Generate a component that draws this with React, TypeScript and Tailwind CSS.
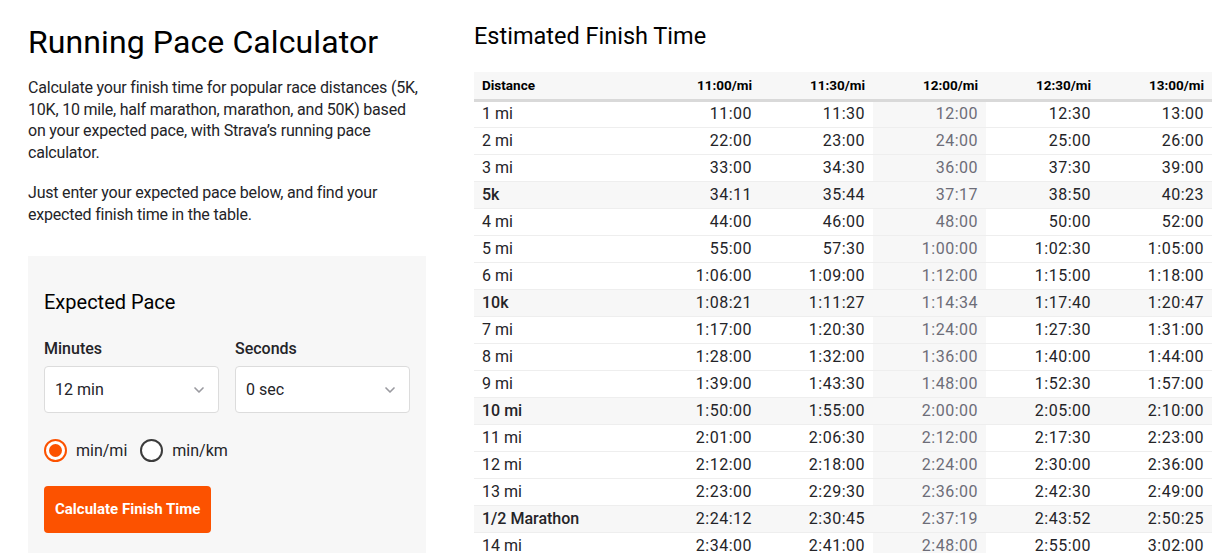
import { ChevronDown } from 'lucide-react'

const paces = ['11:00/mi', '11:30/mi', '12:00/mi', '12:30/mi', '13:00/mi']
const selectedCol = 2

const rows: { label: string; times: string[]; race?: boolean }[] = [
  { label: '1 mi', times: ['11:00', '11:30', '12:00', '12:30', '13:00'] },
  { label: '2 mi', times: ['22:00', '23:00', '24:00', '25:00', '26:00'] },
  { label: '3 mi', times: ['33:00', '34:30', '36:00', '37:30', '39:00'] },
  { label: '5k', times: ['34:11', '35:44', '37:17', '38:50', '40:23'], race: true },
  { label: '4 mi', times: ['44:00', '46:00', '48:00', '50:00', '52:00'] },
  { label: '5 mi', times: ['55:00', '57:30', '1:00:00', '1:02:30', '1:05:00'] },
  { label: '6 mi', times: ['1:06:00', '1:09:00', '1:12:00', '1:15:00', '1:18:00'] },
  { label: '10k', times: ['1:08:21', '1:11:27', '1:14:34', '1:17:40', '1:20:47'], race: true },
  { label: '7 mi', times: ['1:17:00', '1:20:30', '1:24:00', '1:27:30', '1:31:00'] },
  { label: '8 mi', times: ['1:28:00', '1:32:00', '1:36:00', '1:40:00', '1:44:00'] },
  { label: '9 mi', times: ['1:39:00', '1:43:30', '1:48:00', '1:52:30', '1:57:00'] },
  { label: '10 mi', times: ['1:50:00', '1:55:00', '2:00:00', '2:05:00', '2:10:00'], race: true },
  { label: '11 mi', times: ['2:01:00', '2:06:30', '2:12:00', '2:17:30', '2:23:00'] },
  { label: '12 mi', times: ['2:12:00', '2:18:00', '2:24:00', '2:30:00', '2:36:00'] },
  { label: '13 mi', times: ['2:23:00', '2:29:30', '2:36:00', '2:42:30', '2:49:00'] },
  { label: '1/2 Marathon', times: ['2:24:12', '2:30:45', '2:37:19', '2:43:52', '2:50:25'], race: true },
  { label: '14 mi', times: ['2:34:00', '2:41:00', '2:48:00', '2:55:00', '3:02:00'] },
]

function Select({ value }: { value: string }) {
  return (
    <div className="flex h-[47px] items-center justify-between rounded-[4px] border border-[#dcdcdc] bg-white pl-[10px] pr-[11px] pt-[2px] text-[16px] text-[#242428]">
      <span>{value}</span>
      <ChevronDown className="h-[16px] w-[16px] text-[#9a9aa0]" strokeWidth={2.5} />
    </div>
  )
}

function Radio({ checked, label }: { checked?: boolean; label: string }) {
  return (
    <label className="flex items-center gap-[9px]">
      {checked ? (
        <span className="flex h-[23px] w-[23px] items-center justify-center rounded-full border-2 border-[#fc5200] bg-white">
          <span className="h-[13px] w-[13px] rounded-full bg-[#fc5200]" />
        </span>
      ) : (
        <span className="h-[23px] w-[23px] rounded-full border-2 border-[#3c3c3c] bg-white" />
      )}
      <span className="text-[16px] text-[#242428]">{label}</span>
    </label>
  )
}

export default function App() {
  return (
    <div
      className="flex min-h-screen bg-white pl-[28px] text-[#242428]"
      style={{ fontFamily: 'Roboto, "Noto Sans", sans-serif' }}
    >
      <div className="w-[398px] shrink-0 pt-[22px]">
        <h1 className="text-[32px] leading-[40px] tracking-[0.1px] text-black">Running Pace Calculator</h1>
        <p className="mt-[15px] text-[16px] leading-[21.6px] tracking-[-0.2px]">
          Calculate your finish time for popular race distances (5K, 10K, 10 mile, half marathon,
          marathon, and 50K) based on your expected pace, with Strava’s running pace calculator.
        </p>
        <p className="mt-[19px] text-[16px] leading-[21.6px] tracking-[-0.2px]">
          Just enter your expected pace below, and find your expected finish time in the table.
        </p>

        <div className="mt-[30px] bg-[#f7f7f7] px-[16px] pb-[40px] pt-[32px]">
          <h2 className="text-[20px] leading-[28px] text-black">Expected Pace</h2>
          <div className="mt-[21px] grid grid-cols-2 gap-[16px]">
            <div>
              <div className="text-[16px] font-medium leading-[24px]">Minutes</div>
              <div className="mt-[5px]">
                <Select value="12 min" />
              </div>
            </div>
            <div>
              <div className="text-[16px] font-medium leading-[24px]">Seconds</div>
              <div className="mt-[5px]">
                <Select value="0 sec" />
              </div>
            </div>
          </div>
          <div className="mt-[26px] flex items-center gap-[13px]">
            <Radio checked label="min/mi" />
            <Radio label="min/km" />
          </div>
          <button className="mt-[23px] h-[47px] rounded-[4px] bg-[#fc5200] px-[11px] text-[15px] font-bold text-white">
            Calculate Finish Time
          </button>
        </div>
      </div>

      <div className="ml-[48px] w-[738px] shrink-0 pt-[22px]">
        <h2 className="text-[23.5px] leading-[28px] text-black">Estimated Finish Time</h2>
        <table className="mt-[22px] w-full border-collapse text-[16px]">
          <thead>
            <tr className="h-[28px] border-b-[3px] border-[#d9d9d9] bg-[#f7f7f7] text-[13.5px] font-bold text-black">
              <th className="w-[173px] pl-[8px] text-left font-bold">Distance</th>
              {paces.map((p) => (
                <th key={p} className="pr-[8px] text-right font-bold">
                  {p}
                </th>
              ))}
            </tr>
          </thead>
          <tbody>
            {rows.map((r) => (
              <tr
                key={r.label}
                className={`h-[27px] border-b border-[#eeeeee] ${r.race ? 'bg-[#f7f7f7]' : 'bg-white'}`}
              >
                <td className={`pl-[8px] ${r.race ? 'font-medium' : ''}`}>{r.label}</td>
                {r.times.map((t, i) => (
                  <td
                    key={i}
                    className={`pr-[8px] text-right tracking-[0.5px] ${
                      i === selectedCol ? 'bg-[#f7f7f7] text-[#6d6d78]' : ''
                    }`}
                  >
                    {t}
                  </td>
                ))}
              </tr>
            ))}
          </tbody>
        </table>
      </div>
    </div>
  )
}
